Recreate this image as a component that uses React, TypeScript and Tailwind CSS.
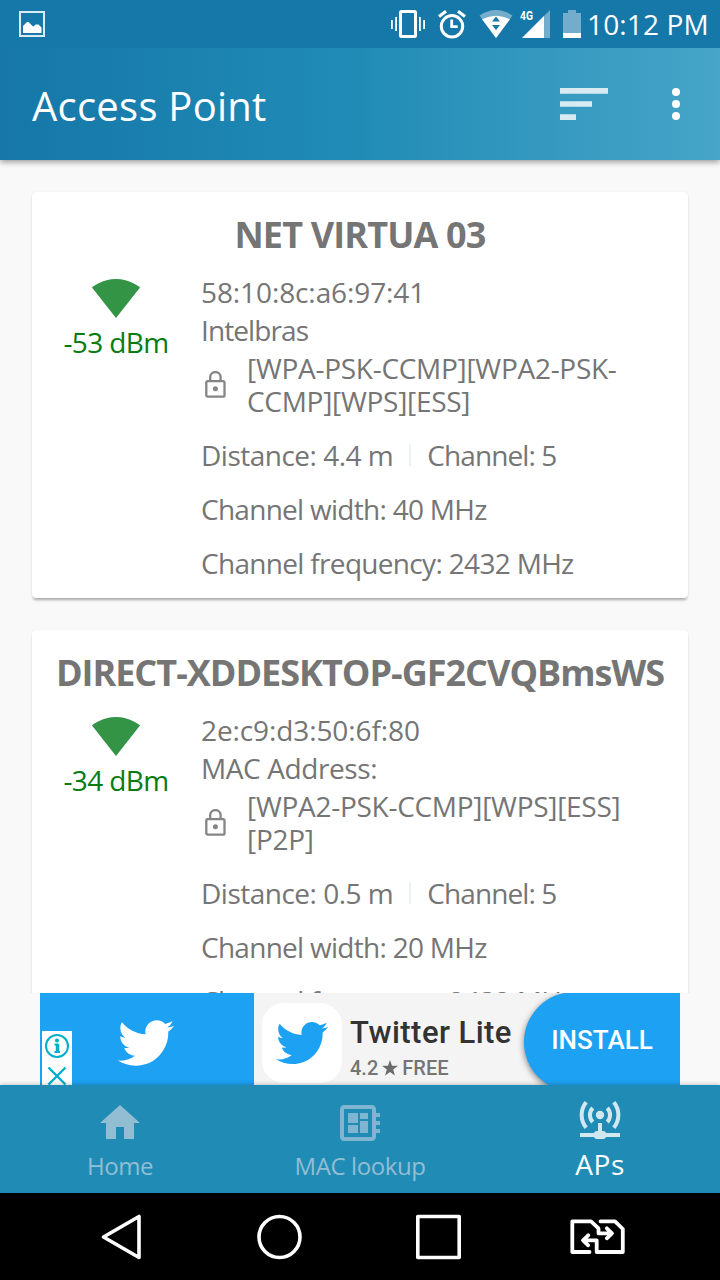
import type { ReactNode } from "react";
import { FaTwitter } from "react-icons/fa";

function StatusBar() {
  return (
    <div className="z-20 flex h-12 shrink-0 items-center bg-[#1677a9] pl-[19px]">
      <svg width="26" height="26" viewBox="0 0 26 26">
        <rect x="1" y="1" width="24" height="24" fill="none" stroke="#dcebf3" strokeWidth="2" />
        <path d="M4 22V15l4-4h1.500l4 4 1 .5 2-2h3l3 3V22z" fill="#fff" />
      </svg>
      <svg className="ml-[346px]" width="34" height="28" viewBox="391 10 34 28" fill="#fff">
        <rect x="400.500" y="11.500" width="15" height="25" rx="1" fill="none" stroke="#fff" strokeWidth="3" />
        <path d="M391 20h1.800v9H391zM395.200 17h1.800v14h-1.800zM419 17h1.800v14H419zM423.200 20h1.800v9h-1.800z" />
      </svg>
      <svg className="ml-[13px]" width="28" height="29" viewBox="438 9.500 28 29" fill="none" stroke="#fff" strokeWidth="3">
        <circle cx="452" cy="25.800" r="10.700" />
        <path d="M439 16l7-5.200M465 16l-7-5.200" strokeWidth="3.200" />
        <path d="M451.700 19v7.200h6" strokeWidth="2.800" />
      </svg>
      <svg className="ml-[13px]" width="34" height="28" viewBox="479 10 34 28">
        <path d="M479.500 15.500Q496 4.500 512.500 15.500L496 38z" fill="#74accb" />
        <path d="M482 19.300Q496 12 510 19.300L496 38z" fill="#fff" />
        <path d="M492 21.500h8l-4-5zM492 25h8l-4 5z" fill="#1677a9" />
      </svg>
      <div className="relative ml-[9px] h-7 w-7">
        <svg width="28" height="28" viewBox="0 0 28 28">
          <path d="M0 28L28 0V28z" fill="#74accb" />
          <path d="M0 28L22 6V28z" fill="#fff" />
        </svg>
        <span className="absolute -left-[2px] top-0 origin-left scale-x-[.86] font-['Roboto'] text-[12px] font-bold leading-[12px] text-white">4G</span>
      </div>
      <svg className="ml-[13px]" width="18" height="28" viewBox="0 0 18 28">
        <path d="M5 0h8v3h5v20H0V3h5z" fill="#74accb" />
        <path d="M0 23h18v5H0z" fill="#fff" />
      </svg>
      <span className="ml-[6px] whitespace-nowrap text-[28px] leading-[38px] tracking-[0.15px] text-white">10:12 PM</span>
    </div>
  );
}

function AppBar() {
  return (
    <header className="z-10 flex h-28 shrink-0 items-center bg-linear-to-r from-[#1677a8] via-[#208cb6] to-[#46a5c8] pl-8 shadow-[0_2px_6px_rgba(0,0,0,0.4)]">
      <h1 className="mt-[4px] text-[40px] leading-[54px] tracking-[0.25px] text-white">Access Point</h1>
      <svg className="ml-auto" width="48" height="32" viewBox="0 0 48 32" fill="#d8ebf3">
        <path d="M0 0h48v5.700H0zM0 13.200h32v5.600H0zM0 26.300h16V32H0z" />
      </svg>
      <svg className="ml-[64px] mr-[40px]" width="8" height="32" viewBox="0 0 8 32" fill="#fff">
        <circle cx="4" cy="4" r="4" />
        <circle cx="4" cy="16" r="4" />
        <circle cx="4" cy="28" r="4" />
      </svg>
    </header>
  );
}

function SignalIcon() {
  return (
    <svg width="48" height="39" viewBox="0.36 3 23.28 18.5" preserveAspectRatio="none" fill="#349446">
      <path d="M12.010 21.490L23.640 7c-.45-.34-4.930-4-11.640-4C5.280 3 .81 6.660.36 7l11.630 14.490.01.010.010-.010z" />
    </svg>
  );
}

function LockIcon() {
  return (
    <svg className="-mt-[2px]" width="21" height="27" viewBox="0 0 21 27" fill="none" stroke="#858585" strokeWidth="2.3">
      <rect x="1.300" y="10.200" width="18.200" height="15.500" rx="1.500" />
      <path d="M5.200 10V6.300a5.200 5.200 0 0 1 10.400 0V10" />
      <circle cx="10.400" cy="17.800" r="2.500" fill="#858585" stroke="none" />
    </svg>
  );
}

interface AccessPoint {
  name: ReactNode;
  level: string;
  mac: ReactNode;
  vendor: ReactNode;
  security: ReactNode;
  distance: string;
  channel: string;
  width: string;
  frequency: string;
}

const accessPoints: AccessPoint[] = [
  {
    name: <span className="tracking-[-0.85px]">NET VIRTUA 03</span>,
    level: "-53 dBm",
    mac: <span className="tracking-[-0.1px]">58:10:8c:a6:97:41</span>,
    vendor: <span className="tracking-[-0.9px]">Intelbras</span>,
    security: <>[WPA-PSK-CCMP][WPA2-PSK-<br />CCMP][WPS][ESS]</>,
    distance: "4.4 m",
    channel: "5",
    width: "40 MHz",
    frequency: "2432 MHz",
  },
  {
    name: <span className="tracking-[-1px]">DIRECT-XDDESKTOP-GF2CVQBmsWS</span>,
    level: "-34 dBm",
    mac: <span className="tracking-[-0.1px]">2e:c9:d3:50:6f:80</span>,
    vendor: <span className="tracking-[-0.4px]">MAC Address:</span>,
    security: <>[WPA2-PSK-CCMP][WPS][ESS]<br />[P2P]</>,
    distance: "0.5 m",
    channel: "5",
    width: "20 MHz",
    frequency: "2432 MHz",
  },
];

function AccessPointCard({ ap }: { ap: AccessPoint }) {
  return (
    <article className="h-[406px] shrink-0 rounded-[4px] bg-white pt-[23px] text-[28px] text-[#757575] shadow-[0_3px_3px_-1px_rgba(0,0,0,0.32),0_0_1px_rgba(0,0,0,0.12)]">
      <h2 className="whitespace-nowrap text-center text-[36px] font-bold leading-10">{ap.name}</h2>
      <div className="mt-[18px] flex whitespace-nowrap">
        <div className="flex w-[169px] flex-col items-center pr-px pt-[6px]">
          <SignalIcon />
          <span className="mt-[5px] leading-[38px] tracking-[-0.6px] text-[#087b12]">{ap.level}</span>
        </div>
        <div className="flex flex-col">
          <span className="leading-[38px]">{ap.mac}</span>
          <span className="leading-[38px]">{ap.vendor}</span>
          <div className="mb-[10px] mt-[3px] flex items-center pl-[4px]">
            <LockIcon />
            <span className="ml-[21px] leading-[33px] tracking-[-0.28px]">{ap.security}</span>
          </div>
          <div className="flex h-[54px] items-center">
            <span className="tracking-[-0.5px]">Distance: {ap.distance}</span>
            <span className="ml-[16px] h-[22px] w-[2px] bg-[#ebf1f5]" />
            <span className="ml-[16px] tracking-[-0.9px]">Channel: {ap.channel}</span>
          </div>
          <span className="leading-[54px] tracking-[-0.72px]">Channel width: {ap.width}</span>
          <span className="leading-[54px] tracking-[-0.68px]">Channel frequency: {ap.frequency}</span>
        </div>
      </div>
    </article>
  );
}

function AdBanner() {
  return (
    <aside className="mx-10 flex h-[92px] shrink-0 overflow-hidden bg-[#f4f4f4] font-['Roboto',sans-serif]">
      <div className="flex w-[214px] items-start bg-[#1da1f2] pl-[2px]">
        <div className="mt-[38px] flex h-[54px] w-[30px] flex-col items-center bg-white">
          <svg width="30" height="54" viewBox="0 0 30 54" fill="none" stroke="#00aecd">
            <circle cx="15" cy="15" r="11" strokeWidth="2" />
            <path d="M12.500 13.500h3v6.500M12.500 21h5.500" strokeWidth="2" />
            <path d="M15.500 13v8" strokeWidth="3.500" />
            <circle cx="15" cy="9.500" r="2" fill="#00aecd" stroke="none" />
            <path d="M6.500 36.500l17 17M23.500 36.500l-17 17" strokeWidth="2.400" />
          </svg>
        </div>
        <FaTwitter size={56} className="ml-[46px] mt-[22px] text-white" />
      </div>
      <div className="ml-2 mt-[10px] flex h-20 w-20 items-center justify-center rounded-[22px] bg-white">
        <FaTwitter size={52} className="text-[#1da1f2]" />
      </div>
      <div className="ml-2 w-[174px] whitespace-nowrap pt-[22px] font-medium">
        <div className="text-[31px] leading-9 tracking-[0.45px] text-[#333]">Twitter Lite</div>
        <div className="mt-[5px] flex items-center text-[20px] leading-6 text-[#757575]">
          4.2
          <svg className="mx-[4px]" width="16" height="16" viewBox="0 0 16 16" fill="#6b6b6b">
            <path d="M8 0l2 5.700 6 .1-4.800 3.700 1.700 5.900L8 12l-4.900 3.400 1.700-5.900L0 5.800l6-.1z" />
          </svg>
          FREE
        </div>
      </div>
      <div className="-mt-px flex h-[100px] w-[156px] shrink-0 items-center justify-center rounded-l-full bg-[#1da1f2] pb-[4px] text-[26px] font-medium text-white shadow-[0_2px_6px_rgba(0,0,0,0.5)]">
        INSTALL
      </div>
    </aside>
  );
}

function BottomNav() {
  return (
    <nav className="z-10 grid h-[108px] shrink-0 grid-cols-3 bg-[#208cb6] text-center shadow-[0_-1px_4px_rgba(0,0,0,0.2)]">
      <div className="flex flex-col items-center pt-[14px] text-[#92bdd3]">
        <svg width="48" height="48" viewBox="0 0 24 24" fill="currentColor">
          <path d="M10 20v-6h4v6h5v-8h3L12 3 2 12h3v8z" />
        </svg>
        <span className="mt-[3px] text-[24px] leading-8 tracking-[-0.4px]">Home</span>
      </div>
      <div className="flex flex-col items-center pt-[14px] text-[#92bdd3]">
        <svg width="48" height="48" viewBox="0 0 24 24" fill="#7fb5d0">
          <path d="M22 9V7h-2V5c0-1.100-.9-2-2-2H4c-1.100 0-2 .9-2 2v14c0 1.100.9 2 2 2h14c1.100 0 2-.9 2-2v-2h2v-2h-2v-2h2v-2h-2V9h2zm-4 10H4V5h14v14zM6 13h5v4H6zm6-6h4v3h-4zM6 7h5v5H6zm6 4h4v6h-4z" />
        </svg>
        <span className="mt-[3px] text-[24px] leading-8 tracking-[-0.4px]">MAC lookup</span>
      </div>
      <div className="flex flex-col items-center pt-[14px] text-white">
        <svg width="48" height="48" viewBox="576 1099 48 48" fill="none" stroke="#d2e8f0" strokeWidth="4">
          <circle cx="600" cy="1115" r="4.200" fill="#d2e8f0" stroke="none" />
          <path d="M592.800 1108a10 10 0 0 0 0 14M607.200 1108a10 10 0 0 1 0 14" />
          <path d="M586.200 1102.300a20 20 0 0 0 0 25.400M613.800 1102.300a20 20 0 0 1 0 25.400" />
          <path d="M600 1123v10M580 1135h40" />
          <rect x="594" y="1131" width="12" height="8" rx="3" fill="#d2e8f0" stroke="none" />
        </svg>
        <span className="mt-[1px] text-[28px] leading-8 tracking-[0.6px]">APs</span>
      </div>
    </nav>
  );
}

function SystemNav() {
  return (
    <div className="flex h-[87px] shrink-0 items-center bg-black pl-[101px]">
      <svg width="42" height="48" viewBox="0 0 42 48" fill="none" stroke="#fff" strokeWidth="3.6" strokeLinejoin="round">
        <path d="M2.500 24L38 3.500v41z" />
      </svg>
      <svg className="ml-[112px]" width="48" height="48" viewBox="0 0 48 48" fill="none" stroke="#fff" strokeWidth="3.6">
        <circle cx="24.500" cy="24" r="20.500" />
      </svg>
      <svg className="ml-[111px]" width="48" height="48" viewBox="0 0 48 48" fill="none" stroke="#fff" strokeWidth="3.6" strokeLinejoin="round">
        <rect x="3.800" y="3.500" width="41.400" height="41" />
      </svg>
      <svg className="ml-[106px]" width="58" height="40" viewBox="568 1217 58 40" fill="none" stroke="#fff" strokeWidth="3.8" strokeLinecap="round" strokeLinejoin="round">
        <path d="M589.500 1252H572.300V1221.300H591L598.500 1228.300V1233.300H611.500M606.800 1228.300l5.200 5-5.200 5" />
        <path d="M600.500 1221.300H615L622.800 1229V1252H596.700V1240.300H583.500M588.200 1235.300l-5.200 5 5.200 5" />
      </svg>
    </div>
  );
}

export default function App() {
  return (
    <div className="flex h-[1280px] w-[720px] flex-col overflow-hidden bg-[#f9f9f9] font-['Open_Sans','Noto_Sans',sans-serif] font-[450]">
      <StatusBar />
      <AppBar />
      <main className="flex h-[833px] shrink-0 flex-col gap-8 overflow-hidden px-8 pt-8">
        {accessPoints.map((ap) => (
          <AccessPointCard key={ap.level} ap={ap} />
        ))}
      </main>
      <AdBanner />
      <BottomNav />
      <SystemNav />
    </div>
  );
}
